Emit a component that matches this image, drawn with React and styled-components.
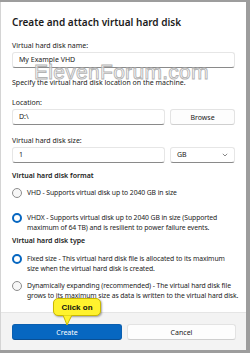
import React from "react";
import styled, { createGlobalStyle } from "styled-components";

const Global = createGlobalStyle`
  html, body { margin: 0; padding: 0; background: #9d9d9d; }
  body { width: 250px; height: 353px; overflow: hidden; }
  * { box-sizing: border-box; }
`;

const Frame = styled.div`
  width: 250px;
  height: 353px;
  padding: 2px 4px 3px 0;
  background: #9d9d9d;
`;

const Dialog = styled.div`
  position: relative;
  height: 100%;
  display: flex;
  flex-direction: column;
  background: #ffffff;
  border-left: 1px solid #d4d4d4;
  font-family: "Noto Sans", "Open Sans", sans-serif;
  color: #1b1b1b;
`;

const Body = styled.div`
  flex: 1;
  min-height: 0;
  padding: 13px 11px 0 11px;
  display: flex;
  flex-direction: column;
`;

const Title = styled.div`
  font-size: 10px;
  line-height: 14px;
  font-weight: 600;
  margin-bottom: 12px;
`;

const Label = styled.div`
  font-size: 7px;
  line-height: 10px;
  margin-top: ${(p) => p.$mt || 0}px;
  margin-bottom: ${(p) => p.$mb || 0}px;
  font-weight: ${(p) => (p.$bold ? 600 : 400)};
`;

const Row = styled.div`
  display: flex;
  gap: 5px;
`;

const Input = styled.div`
  flex: ${(p) => (p.$grow ? 1 : "none")};
  width: ${(p) => (p.$w ? p.$w + "px" : "auto")};
  height: 16px;
  border: 1px solid #e6e6e6;
  border-bottom-color: #8a8a8a;
  border-radius: 3px;
  background: #fff;
  font-size: 7px;
  line-height: 14px;
  padding: 0 6px;
  display: flex;
  align-items: center;
  justify-content: space-between;
`;

const Button = styled.div`
  flex: ${(p) => (p.$grow ? 1 : "none")};
  width: ${(p) => (p.$w ? p.$w + "px" : "auto")};
  height: 16px;
  border: 1px solid ${(p) => (p.$primary ? "#0a5fb0" : "#e3e3e3")};
  border-bottom-color: ${(p) => (p.$primary ? "#0a4f94" : "#cfcfcf")};
  border-radius: 3px;
  background: ${(p) => (p.$primary ? "#0767c1" : "#fdfdfd")};
  color: ${(p) => (p.$primary ? "#ffffff" : "#1b1b1b")};
  font-size: 7px;
  display: flex;
  align-items: center;
  justify-content: center;
`;

const Option = styled.div`
  display: flex;
  gap: 5px;
  margin-top: ${(p) => p.$mt || 0}px;
  margin-right: -4px;
  font-size: 6.8px;
  line-height: 10px;
  letter-spacing: -0.08px;
`;

const RadioWrap = styled.div`
  flex: none;
  width: 10px;
  height: 10px;
  display: flex;
  align-items: center;
`;

const Radio = styled.div`
  width: 10px;
  height: 10px;
  border-radius: 50%;
  border: ${(p) => (p.$on ? "2.6px solid #0767c1" : "1px solid #8d8d8d")};
  background: ${(p) => (p.$on ? "#fff" : "#f7f7f7")};
`;

const OptionText = styled.div`
  flex: 1;
`;

const Footer = styled.div`
  flex: none;
  height: 38px;
  background: #f3f3f3;
  border-top: 1px solid #e5e5e5;
  padding: 11px 9px 0 11px;
  display: flex;
  gap: 5px;
`;

const Watermark = styled.div`
  position: absolute;
  left: 33px;
  top: 58px;
  font-family: "Liberation Sans", Arial, sans-serif;
  font-size: 21px;
  letter-spacing: 0.3px;
  color: rgba(255, 255, 255, 0.6);
  -webkit-text-stroke: 0.9px #b3b3b3;
  pointer-events: none;
  white-space: nowrap;
`;

const Callout = styled.div`
  position: absolute;
  left: 52px;
  top: 296px;
  width: 48px;
  height: 18px;
  background: #fff22e;
  border: 1px solid #c9b800;
  border-radius: 5px;
  box-shadow: 1px 1px 2px rgba(0, 0, 0, 0.35);
  font-family: "Liberation Sans", Arial, sans-serif;
  font-weight: 700;
  font-size: 8px;
  color: #111;
  display: flex;
  align-items: center;
  justify-content: center;
`;

const Tail = styled.svg`
  position: absolute;
  left: 9px;
  top: 16px;
  overflow: visible;
`;

const Chevron = () => (
  <svg width="6" height="4" viewBox="0 0 6 4">
    <path d="M0.8 0.8 L3 3 L5.2 0.8" fill="none" stroke="#6a6a6a" strokeWidth="0.8" />
  </svg>
);

export default function App() {
  return (
    <>
      <Global />
      <Frame>
        <Dialog>
          <Body>
            <Title>Create and attach virtual hard disk</Title>
            <Label $mb={1}>Virtual hard disk name:</Label>
            <Input>My Example VHD</Input>
            <Label $mt={10}>Specify the virtual hard disk location on the machine.</Label>
            <Label $mt={10} $mb={1}>Location:</Label>
            <Row>
              <Input $grow>D:\</Input>
              <Button $w={65}>Browse</Button>
            </Row>
            <Label $mt={11} $mb={1}>Virtual hard disk size:</Label>
            <Row>
              <Input $grow>1</Input>
              <Input $w={65}>
                <span>GB</span>
                <Chevron />
              </Input>
            </Row>
            <Label $mt={8} $bold>Virtual hard disk format</Label>
            <Option $mt={7}>
              <RadioWrap><Radio /></RadioWrap>
              <OptionText>VHD - Supports virtual disk up to 2040 GB in size</OptionText>
            </Option>
            <Option $mt={15}>
              <RadioWrap><Radio $on /></RadioWrap>
              <OptionText>
                VHDX - Supports virtual disk up to 2040 GB in size (Supported maximum of 64 TB) and is resilient to power failure events.
              </OptionText>
            </Option>
            <Label $mt={3} $bold>Virtual hard disk type</Label>
            <Option $mt={8}>
              <RadioWrap><Radio $on /></RadioWrap>
              <OptionText>
                Fixed size - This virtual hard disk file is allocated to its maximum
                <br />
                size when the virtual hard disk is created.
              </OptionText>
            </Option>
            <Option $mt={7}>
              <RadioWrap><Radio /></RadioWrap>
              <OptionText>
                Dynamically expanding (recommended) - The virtual hard disk file grows to its maximum size as data is written to the virtual hard disk.
              </OptionText>
            </Option>
          </Body>
          <Footer>
            <Button $primary $w={110}>Create</Button>
            <Button $w={109}>Cancel</Button>
          </Footer>
          <Watermark>ElevenForum.com</Watermark>
          <Callout>
            Click on
            <Tail width="12" height="12" viewBox="0 0 12 12">
              <path d="M0 0 L4 10 L9 0 Z" fill="#fff22e" stroke="#c9b800" strokeWidth="1" />
              <path d="M-0.5 -0.6 L9.5 -0.6" stroke="#fff22e" strokeWidth="1.4" />
            </Tail>
          </Callout>
        </Dialog>
      </Frame>
    </>
  );
}
